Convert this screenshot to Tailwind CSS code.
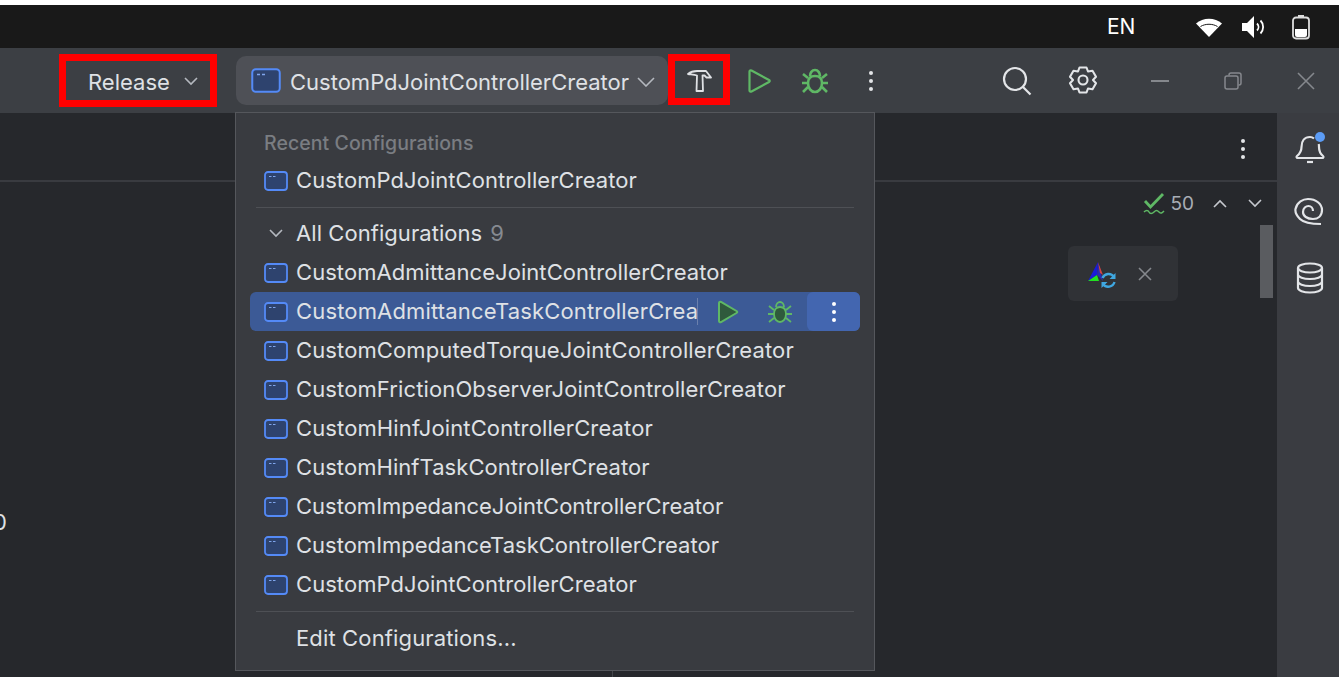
<!DOCTYPE html>
<html lang="en">
<head>
    <meta charset="UTF-8">
    <title>Run configurations</title>
    <script src="https://cdn.jsdelivr.net/npm/@tailwindcss/browser@4"></script>
</head>
<body class="bg-white">
<div class="relative w-[1339px] h-[677px] overflow-hidden font-['Inter','Noto_Sans',sans-serif] text-[#dfe1e5]">
    <div class="h-[5px] bg-white"></div>

    <!-- system bar -->
    <div class="h-[43px] bg-[#191919] flex items-center text-white">
        <span class="ml-[1107px] w-[31px] text-[21px]">EN</span>
        <svg class="ml-[56px]" width="30" height="22" viewBox="0 0 30 22"><path d="M2 7.500C9 1 21 1 28 7.500L15 21Z" fill="#fff"/><path d="M6.500 10.500C11.500 7.500 18.500 7.500 23.500 10.500" fill="none" stroke="#191919" stroke-width="1"/></svg>
        <svg class="ml-[17px]" width="26" height="24" viewBox="0 0 26 24"><path d="M1 8h5l7-7v22l-7-7H1Z" fill="#fff"/><path d="M16 8.500c2 2 2 5 0 7M19.500 5.500c3.500 3.500 3.500 9.500 0 13" fill="none" stroke="#fff" stroke-width="1.800"/></svg>
        <svg class="ml-[24px]" width="20" height="26" viewBox="0 0 20 26"><rect x="7" y="1" width="6" height="3" fill="#ddd"/><rect x="2" y="3.500" width="16" height="21" rx="3" fill="#191919" stroke="#ddd" stroke-width="1.800"/><path d="M4 15h12v6a2 2 0 0 1-2 2H6a2 2 0 0 1-2-2Z" fill="#fff"/></svg>
    </div>

    <!-- toolbar -->
    <div class="h-[65px] bg-[#3c3f44] flex items-center">
        <div class="ml-[59px] w-[158px] h-[53px] border-[7px] border-[#ff0000] flex items-center shrink-0">
            <span class="ml-[22px] mt-[3px] text-[22px] leading-none">Release</span>
            <svg class="ml-[14px] mt-[1px]" width="14" height="9" viewBox="0 0 14 9"><path d="M1 1l6 6 6-6" fill="none" stroke="#b4b8bf" stroke-width="1.600"/></svg>
        </div>
        <div class="ml-[19px] w-[432px] h-[49px] rounded-[10px] bg-[#4e5056] flex items-center shrink-0">
            <svg class="ml-[15px]" width="30" height="25" viewBox="0 0 30 25"><rect x="1.250" y="1.250" width="27.500" height="22.500" rx="3.500" fill="#2e436e" stroke="#548af7" stroke-width="2"/><path d="M6 6.500h3M11 6.500h3" stroke="#7fa5ec" stroke-width="1.500"/></svg>
            <span class="ml-[9px] mt-[2px] text-[22px] leading-none whitespace-nowrap">CustomPdJointControllerCreator</span>
            <svg class="ml-[8px] mt-[2px]" width="18" height="10" viewBox="0 0 18 10"><path d="M1 1l8 8 8-8" fill="none" stroke="#b4b8bf" stroke-width="1.600"/></svg>
        </div>
        <div class="mt-[-2px] w-[62px] h-[51px] border-[7px] border-[#ff0000] flex items-center justify-center shrink-0">
            <svg class="mt-[3px]" width="26" height="26" viewBox="0 0 26 26"><path d="M2 6C5 3.500 8 3 11 3H20L25 9.500H20.500L18.500 7.500H16.500L17 23H10.500L11 7.500C8 6.500 5 6.500 2 6Z" fill="none" stroke="#dfe1e5" stroke-width="1.800" stroke-linejoin="round"/></svg>
        </div>
        <svg class="ml-[17px]" width="24" height="26" viewBox="0 0 24 26"><path d="M2.500 3.500v19c0 1 1 1.500 2 1L22 14c1-.6 1-1.400 0-2L4.500 2.500c-1-.5-2 0-2 1Z" fill="none" stroke="#5fb865" stroke-width="2.200"/></svg>
        <svg class="ml-[30px]" width="28" height="26" viewBox="0 0 28 26"><g fill="none" stroke="#5fb865" stroke-width="2.600"><path d="M14 8c5 0 7 3 7 7 0 5-3 9-7 9s-7-4-7-9c0-4 2-7 7-7Z"/><path d="M9 8c0-3 2-6 5-6s5 3 5 6M2 6l5 4M26 6l-5 4M1 15h6M27 15h-6M2 24l5-5M26 24l-5-5"/></g></svg>
        <div class="ml-[40px] w-[4px] flex flex-col gap-[4px] shrink-0"><i class="size-[4px] rounded-full bg-[#e3e5e8]"></i><i class="size-[4px] rounded-full bg-[#e3e5e8]"></i><i class="size-[4px] rounded-full bg-[#e3e5e8]"></i></div>
        <svg class="ml-[129px]" width="30" height="30" viewBox="0 0 30 30"><circle cx="13" cy="13" r="11" fill="none" stroke="#e3e5e8" stroke-width="2.200"/><path d="M21 21l7.500 7.500" stroke="#e3e5e8" stroke-width="2.200"/></svg>
        <svg class="ml-[35px]" width="32" height="32" viewBox="0 0 32 32"><g fill="none" stroke="#e3e5e8" stroke-width="2.100" stroke-linejoin="round"><path d="M12.500 2.500h7l1.500 4 4.500-.8 3.500 6-3 3.300 3 3.300-3.500 6-4.500-.8-1.500 4h-7l-1.500-4-4.500.8-3.500-6 3-3.300-3-3.300 3.500-6 4.500.8Z"/><circle cx="16" cy="15" r="4.500"/></g></svg>
        <div class="ml-[52px] w-[18px] h-[2px] bg-[#85888d] shrink-0"></div>
        <svg class="ml-[55px]" width="18" height="18" viewBox="0 0 18 18"><g fill="none" stroke="#85888d" stroke-width="1.500"><rect x="1" y="4" width="13" height="13" rx="2"/><path d="M5 3.500V3a2 2 0 0 1 2-2h8a2 2 0 0 1 2 2v8a2 2 0 0 1-2 2h-.5"/></g></svg>
        <svg class="ml-[55px]" width="18" height="18" viewBox="0 0 18 18"><path d="M1 1l16 16M17 1L1 17" stroke="#85888d" stroke-width="1.600"/></svg>
    </div>

    <!-- body -->
    <div class="h-[564px] flex bg-[#26282c]">
        <div class="relative flex-1">
            <div class="h-[69px] border-b-2 border-[#393b40] flex justify-end">
                <div class="mr-[32px] mt-[26px] w-[4px] flex flex-col gap-[4px]"><i class="size-[4px] rounded-full bg-[#e3e5e8]"></i><i class="size-[4px] rounded-full bg-[#e3e5e8]"></i><i class="size-[4px] rounded-full bg-[#e3e5e8]"></i></div>
            </div>
            <div class="flex items-center justify-end h-[43px] pr-[15px]">
                <svg width="22" height="22" viewBox="0 0 22 22"><path d="M2 8l5.500 6L20 1" fill="none" stroke="#5fb865" stroke-width="2.800"/><path d="M1 19c2-2 4-2 5 0s3 2 5 0 3-2 5 0 3 1 5-1" fill="none" stroke="#5fb865" stroke-width="1.500"/></svg>
                <span class="ml-[5px] text-[19px] leading-none text-[#a8adb5]">50</span>
                <svg class="ml-[19px]" width="14" height="9" viewBox="0 0 14 9"><path d="M1 8l6-6 6 6" fill="none" stroke="#c5c8ce" stroke-width="1.600"/></svg>
                <svg class="ml-[21px]" width="14" height="9" viewBox="0 0 14 9"><path d="M1 1l6 6 6-6" fill="none" stroke="#c5c8ce" stroke-width="1.600"/></svg>
            </div>
            <div class="mt-[286px] ml-[-7px] text-[22px] leading-none text-[#dfe1e5]">0</div>

            <!-- floating toolbar -->
            <div class="absolute left-[1068px] top-[133px] w-[110px] h-[55px] rounded-[6px] bg-[#303236] flex items-center">
                <svg class="ml-[20px]" width="28" height="28" viewBox="0 0 28 28"><path d="M10 2L0 21 9 15Z" fill="#1a1ad8"/><path d="M10 2L9 15 15 21Z" fill="#2a2ab0"/><path d="M10 2L15 15 12 13Z" fill="#d04444"/><path d="M0 21L9 15 11 21Z" fill="#22e022"/><g fill="none" stroke="#3fa7e0" stroke-width="2.400"><path d="M14.500 18a6.500 6.500 0 0 1 11.500-1"/><path d="M26.500 22a6.500 6.500 0 0 1-11.500 2"/></g><path d="M27.500 13v6h-6ZM13.500 28v-6h6Z" fill="#3fa7e0"/></svg>
                <svg class="ml-[22px]" width="14" height="14" viewBox="0 0 14 14"><path d="M1 1l12 12M13 1L1 13" stroke="#85888d" stroke-width="1.600"/></svg>
            </div>
            <!-- scrollbar -->
            <div class="absolute left-[1260px] top-[112px] w-[13px] h-[73px] bg-[#5a5c60]"></div>
            <!-- divider under popup -->
            <div class="absolute left-[612px] top-[556px] w-px h-[8px] bg-[#43454a]"></div>
        </div>

        <!-- right stripe -->
        <div class="w-[62px] shrink-0 bg-[#3a3c41] flex flex-col items-center">
            <svg class="mt-[19px] ml-[3px]" width="32" height="32" viewBox="0 0 32 32"><path d="M20 6.500C18.800 5.500 17.500 5 16 5 10.500 5 7.500 9 7.500 15c0 4.500-2 7-4.500 9-.8.700-.5 2 .5 2h25c1 0 1.300-1.300.500-2-2.500-2-4-4.500-4-9 0-1 0-2-.3-3" fill="none" stroke="#e3e5e8" stroke-width="2.200"/><path d="M13 30h6" stroke="#e3e5e8" stroke-width="2.200"/><circle cx="26" cy="5" r="5" fill="#5c9cf5"/></svg>
            <svg class="mt-[33px] ml-[1px]" width="30" height="30" viewBox="0 0 30 30"><path d="M27 27C18 27 10 26 6 22 2 18 1 15 1.500 12 3 5 9 2 14 2 22 2 28 7 28 13 28 19 24 22 19 22 13 22 9 19 9 15 9 11 12 9 14.500 9 17 9 19 11 19 14" fill="none" stroke="#e3e5e8" stroke-width="2.200"/></svg>
            <svg class="mt-[35px] ml-[3px]" width="28" height="32" viewBox="0 0 28 32"><g fill="none" stroke="#e3e5e8" stroke-width="2.200"><ellipse cx="14" cy="6" rx="12" ry="4.500"/><path d="M2 6v20c0 2.500 5.400 4.500 12 4.500S26 28.500 26 26V6M2 12.500c0 2.500 5.400 4.500 12 4.500s12-2 12-4.500M2 19.500c0 2.500 5.400 4.500 12 4.500s12-2 12-4.500"/></g></svg>
        </div>
    </div>

    <!-- run configurations popup -->
    <div class="absolute left-[235px] top-[112px] w-[640px] h-[559px] border border-[#55575c] bg-[#393b40] text-[22px] tracking-[0.06px] pt-[12px]">
        <div class="h-[36px] pl-[28px] pt-[2px] flex items-center text-[19.500px] font-medium text-[#7a7d82]">Recent Configurations</div>
        <div class="h-[39px] pl-[28px] flex items-center gap-[8px]">
            <svg width="24" height="20" viewBox="0 0 24 20"><rect x="1" y="1" width="22" height="18" rx="3" fill="#2e436e" stroke="#548af7" stroke-width="1.800"/><path d="M5 5.500h2.500M9 5.500h2.500" stroke="#7fa5ec" stroke-width="1.200"/></svg>
            <span>CustomPdJointControllerCreator</span>
        </div>
        <div class="mt-[7px] mx-[20px] h-px bg-[#4e5055]"></div>
        <div class="mt-[6px] h-[39px] pl-[33px] flex items-center">
            <svg width="14" height="9" viewBox="0 0 14 9"><path d="M1 1l6 6 6-6" fill="none" stroke="#b4b8bf" stroke-width="1.600"/></svg>
            <span class="ml-[13px]">All Configurations</span>
            <span class="ml-[8px] text-[#868a91]">9</span>
        </div>
        <div class="h-[39px] pl-[28px] flex items-center gap-[8px]">
            <svg width="24" height="20" viewBox="0 0 24 20"><rect x="1" y="1" width="22" height="18" rx="3" fill="#2e436e" stroke="#548af7" stroke-width="1.800"/><path d="M5 5.500h2.500M9 5.500h2.500" stroke="#7fa5ec" stroke-width="1.200"/></svg>
            <span>CustomAdmittanceJointControllerCreator</span>
        </div>
        <div class="h-[39px] mx-[14px] w-[610px] pl-[14px] rounded-[6px] bg-[#3c5a96] flex items-center">
            <svg class="shrink-0" width="24" height="20" viewBox="0 0 24 20"><rect x="1" y="1" width="22" height="18" rx="3" fill="#2e436e" stroke="#548af7" stroke-width="1.800"/><path d="M5 5.500h2.500M9 5.500h2.500" stroke="#7fa5ec" stroke-width="1.200"/></svg>
            <span class="ml-[8px] w-[400px] whitespace-nowrap shrink-0 tracking-[0.16px]">CustomAdmittanceTaskControllerCrea</span>
            <div class="ml-[1px] w-px h-[27px] bg-[#6b80ad] shrink-0"></div>
            <svg class="ml-[19px] shrink-0" width="22" height="24" viewBox="0 0 22 24"><path d="M2 3v18c0 1 1 1.500 2 1l15.500-9c1-.6 1-1.400 0-2L4 2c-1-.5-2 0-2 1Z" fill="#2f5a3c" stroke="#5fb865" stroke-width="2"/></svg>
            <svg class="ml-[29px] shrink-0" width="24" height="24" viewBox="0 0 24 24"><g fill="#2f5a3c" stroke="#5fb865" stroke-width="1.800"><path d="M12 7c4 0 6 3 6 7 0 5-3 8-6 8s-6-3-6-8c0-4 2-7 6-7Z"/><path d="M8 7c0-3 2-5 4-5s4 2 4 5" fill="none"/><path d="M1 6l5 4M23 6l-5 4M0 14h6M24 14h-6M1 22l5-4M23 22l-5-4" fill="none"/></g></svg>
            <div class="ml-[15px] w-[53px] h-[39px] rounded-[6px] bg-[#4366b0] flex flex-col items-center justify-center gap-[4px] shrink-0"><i class="size-[4px] rounded-full bg-white"></i><i class="size-[4px] rounded-full bg-white"></i><i class="size-[4px] rounded-full bg-white"></i></div>
        </div>
        <div class="h-[39px] pl-[28px] flex items-center gap-[8px]">
            <svg width="24" height="20" viewBox="0 0 24 20"><rect x="1" y="1" width="22" height="18" rx="3" fill="#2e436e" stroke="#548af7" stroke-width="1.800"/><path d="M5 5.500h2.500M9 5.500h2.500" stroke="#7fa5ec" stroke-width="1.200"/></svg>
            <span class="tracking-[0.12px]">CustomComputedTorqueJointControllerCreator</span>
        </div>
        <div class="h-[39px] pl-[28px] flex items-center gap-[8px]">
            <svg width="24" height="20" viewBox="0 0 24 20"><rect x="1" y="1" width="22" height="18" rx="3" fill="#2e436e" stroke="#548af7" stroke-width="1.800"/><path d="M5 5.500h2.500M9 5.500h2.500" stroke="#7fa5ec" stroke-width="1.200"/></svg>
            <span class="tracking-[0.12px]">CustomFrictionObserverJointControllerCreator</span>
        </div>
        <div class="h-[39px] pl-[28px] flex items-center gap-[8px]">
            <svg width="24" height="20" viewBox="0 0 24 20"><rect x="1" y="1" width="22" height="18" rx="3" fill="#2e436e" stroke="#548af7" stroke-width="1.800"/><path d="M5 5.500h2.500M9 5.500h2.500" stroke="#7fa5ec" stroke-width="1.200"/></svg>
            <span class="tracking-[0.12px]">CustomHinfJointControllerCreator</span>
        </div>
        <div class="h-[39px] pl-[28px] flex items-center gap-[8px]">
            <svg width="24" height="20" viewBox="0 0 24 20"><rect x="1" y="1" width="22" height="18" rx="3" fill="#2e436e" stroke="#548af7" stroke-width="1.800"/><path d="M5 5.500h2.500M9 5.500h2.500" stroke="#7fa5ec" stroke-width="1.200"/></svg>
            <span>CustomHinfTaskControllerCreator</span>
        </div>
        <div class="h-[39px] pl-[28px] flex items-center gap-[8px]">
            <svg width="24" height="20" viewBox="0 0 24 20"><rect x="1" y="1" width="22" height="18" rx="3" fill="#2e436e" stroke="#548af7" stroke-width="1.800"/><path d="M5 5.500h2.500M9 5.500h2.500" stroke="#7fa5ec" stroke-width="1.200"/></svg>
            <span class="tracking-normal">CustomImpedanceJointControllerCreator</span>
        </div>
        <div class="h-[39px] pl-[28px] flex items-center gap-[8px]">
            <svg width="24" height="20" viewBox="0 0 24 20"><rect x="1" y="1" width="22" height="18" rx="3" fill="#2e436e" stroke="#548af7" stroke-width="1.800"/><path d="M5 5.500h2.500M9 5.500h2.500" stroke="#7fa5ec" stroke-width="1.200"/></svg>
            <span class="tracking-normal">CustomImpedanceTaskControllerCreator</span>
        </div>
        <div class="h-[39px] pl-[28px] flex items-center gap-[8px]">
            <svg width="24" height="20" viewBox="0 0 24 20"><rect x="1" y="1" width="22" height="18" rx="3" fill="#2e436e" stroke="#548af7" stroke-width="1.800"/><path d="M5 5.500h2.500M9 5.500h2.500" stroke="#7fa5ec" stroke-width="1.200"/></svg>
            <span>CustomPdJointControllerCreator</span>
        </div>
        <div class="mt-[7px] mx-[20px] h-px bg-[#4e5055]"></div>
        <div class="mt-[7px] h-[39px] pl-[60px] flex items-center tracking-[0.14px]">Edit Configurations...</div>
    </div>
</div>
</body>
</html>
